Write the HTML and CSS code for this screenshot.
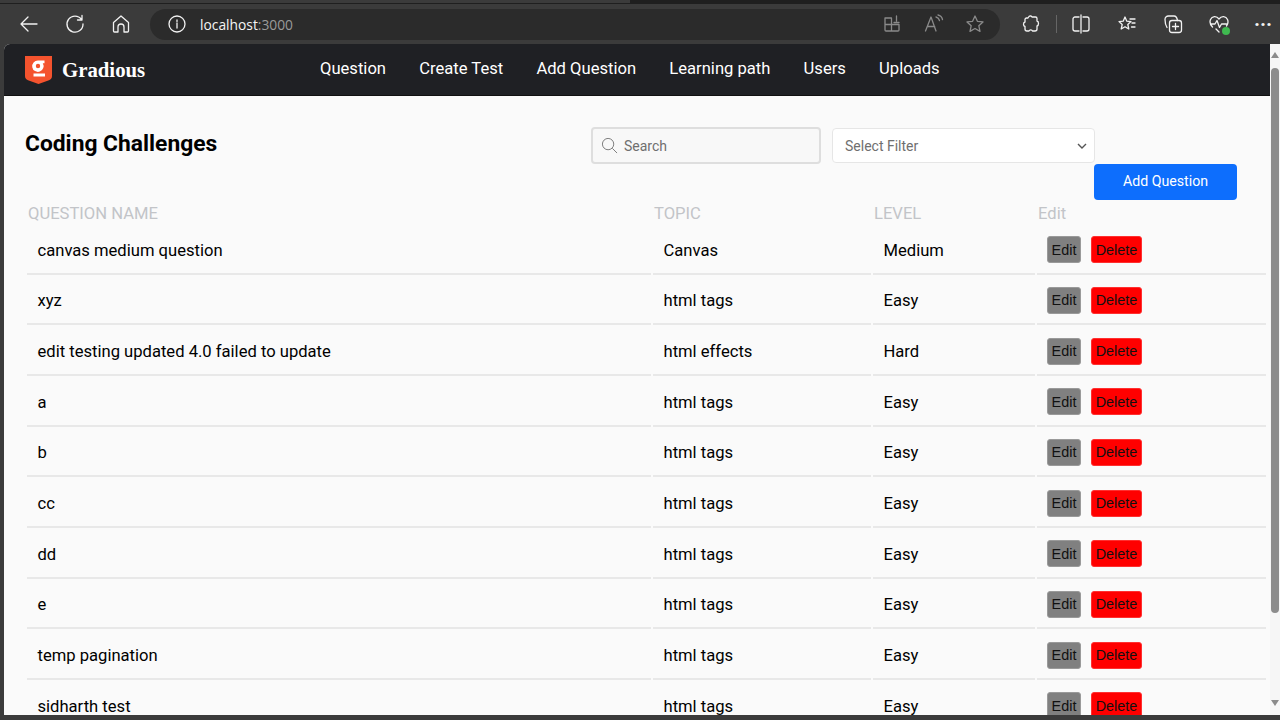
FILE: index.html
```html
<!DOCTYPE html>
<html lang="en">
<head>
  <meta charset="UTF-8">
  <title>Coding Challenges</title>
  <link rel="stylesheet" href="styles.css">
</head>
<body>
  <div class="browser">
    <div class="tabstrip"><span class="tab-edge"></span></div>
    <div class="toolbar">
      <svg class="tool tool-back" viewBox="0 0 20 20"><path d="M18 10H2M9 3l-7 7 7 7"/></svg>
      <svg class="tool tool-reload" viewBox="0 0 20 20"><path d="M16.5 5.5A8 8 0 1 0 18 10M17 1.5v4.5h-4.5"/></svg>
      <svg class="tool tool-home" viewBox="0 0 20 20"><path d="M2.5 8.5 10 2l7.500 6.500V17a1 1 0 0 1-1 1H13v-5a3 3 0 0 0-6 0v5H3.500a1 1 0 0 1-1-1z"/></svg>
      <div class="address">
        <svg class="tool tool-info" viewBox="0 0 20 20"><circle cx="10" cy="10" r="8"/><path d="M10 9v5M10 6v1.400"/></svg>
        <span class="url">localhost<span class="port">:3000</span></span>
        <svg class="tool dim tool-apps" viewBox="0 0 20 20"><path d="M2 4h6.500v13H3a1 1 0 0 1-1-1zM2 10.500h14V16a1 1 0 0 1-1 1H8.500M11 8.500H16M13.500 2v5"/></svg>
        <svg class="tool dim tool-read" viewBox="0 0 20 20"><path d="M1.500 17 7 3l5 14M3.200 12.500h7.500M12 3c2 .5 3 1.500 3.500 3.500M14 1c2.500.5 4 2 4.500 4.500"/></svg>
        <svg class="tool dim tool-star" viewBox="0 0 20 20"><path d="m10 2 2.400 5.300 5.600.6-4.200 3.800 1.200 5.700-5-2.900-5 2.900 1.200-5.700L2 7.900l5.600-.6z"/></svg>
      </div>
      <svg class="tool tool-ext" viewBox="0 0 20 20"><path d="M8 2.500c1-1 2.500-.5 3 .5h3.500a1.500 1.500 0 0 1 1.500 1.500V7c2 .5 2 4.500 0 5v3a2 2 0 0 1-2 2h-2.500c-.5-1.500-3-1.500-3.500 0H6a2 2 0 0 1-2-2v-2.500C2 12 2 8.500 4 8V5.500A1.500 1.500 0 0 1 5.500 4H7z"/></svg>
      <span class="divider"></span>
      <svg class="tool tool-split" viewBox="0 0 20 20"><path d="M8 3H4a2 2 0 0 0-2 2v10a2 2 0 0 0 2 2h4M12 3h4a2 2 0 0 1 2 2v10a2 2 0 0 1-2 2h-4M10 1v18"/></svg>
      <svg class="tool tool-favs" viewBox="0 0 20 20"><path d="m8 3 1.800 4.200 4.200.4-3.200 2.900 1 4.500L8 12.700 4.200 15l1-4.500L2 7.600l4.200-.4zM13 5h5M15 9h3M14.500 13H18"/></svg>
      <svg class="tool tool-coll" viewBox="0 0 20 20"><rect x="6.500" y="6.500" width="12" height="12" rx="2.500"/><path d="M4 13.500C2.500 11 2 8 2 5.500 2 3.500 3.500 2 5.500 2H11c2 0 3 1.500 3.500 4.500M12.500 9.500v6M9.500 12.500h6"/></svg>
      <span class="health">
        <svg class="tool tool-heart" viewBox="0 0 20 20"><path d="M3.500 13C1 10.500.5 8 1.500 5.500 3 2 7.500 1.500 10 5c2.500-3.500 7-3 8.500.5 1 2.500.5 4.500-1 6.500M1.500 10H6l2-3.500 2.500 7 2-3.500h5M7 15l3 3"/></svg>
        <span class="health-dot"></span>
      </span>
      <span class="more">&middot;&middot;&middot;</span>
    </div>

    <div class="viewport">
      <div class="page">
        <nav class="navbar">
          <div class="brand">
            <svg class="logo" viewBox="0 0 27 28">
              <path class="logo-shield" d="M0 0h27v20c0 2-1 3.500-3 4.200L13.500 28 3 24.200C1 23.500 0 22 0 20z"/>
              <path class="logo-g" d="M13 4.500h6.500v2.800h-1.700a5.700 5.700 0 1 1-4.800-2.800zM13 7.800a2.200 2.200 0 1 0 0 4.400 2.200 2.200 0 0 0 0-4.400zM8.500 17.500H20v3H8.500z"/>
            </svg>
            <span class="brand-name">Gradious</span>
          </div>
          <div class="nav-links">
            <a>Question</a>
            <a>Create Test</a>
            <a>Add Question</a>
            <a>Learning path</a>
            <a>Users</a>
            <a>Uploads</a>
          </div>
        </nav>

        <main class="content">
          <div class="top-row">
            <h1>Coding Challenges</h1>
            <div class="search">
              <svg class="search-icon" viewBox="0 0 18 18"><circle cx="7.500" cy="7.500" r="6"/><path d="m12 12 5 5"/></svg>
              <span>Search</span>
            </div>
            <div class="filter">
              <span>Select Filter</span>
              <svg class="chevron" viewBox="0 0 10 6"><path d="m1 1 4 4 4-4"/></svg>
            </div>
          </div>
          <div class="add-row"><button class="add-btn">Add Question</button></div>

          <table class="questions">
            <thead>
              <tr><th class="col-name">QUESTION NAME</th><th class="col-topic">TOPIC</th><th class="col-level">LEVEL</th><th>Edit</th></tr>
            </thead>
            <tbody>
              <tr><td>canvas medium question</td><td>Canvas</td><td>Medium</td><td class="actions"><button class="edit">Edit</button><button class="delete">Delete</button></td></tr>
              <tr><td>xyz</td><td>html tags</td><td>Easy</td><td class="actions"><button class="edit">Edit</button><button class="delete">Delete</button></td></tr>
              <tr><td>edit testing updated 4.0 failed to update</td><td>html effects</td><td>Hard</td><td class="actions"><button class="edit">Edit</button><button class="delete">Delete</button></td></tr>
              <tr><td>a</td><td>html tags</td><td>Easy</td><td class="actions"><button class="edit">Edit</button><button class="delete">Delete</button></td></tr>
              <tr><td>b</td><td>html tags</td><td>Easy</td><td class="actions"><button class="edit">Edit</button><button class="delete">Delete</button></td></tr>
              <tr><td>cc</td><td>html tags</td><td>Easy</td><td class="actions"><button class="edit">Edit</button><button class="delete">Delete</button></td></tr>
              <tr><td>dd</td><td>html tags</td><td>Easy</td><td class="actions"><button class="edit">Edit</button><button class="delete">Delete</button></td></tr>
              <tr><td>e</td><td>html tags</td><td>Easy</td><td class="actions"><button class="edit">Edit</button><button class="delete">Delete</button></td></tr>
              <tr><td>temp pagination</td><td>html tags</td><td>Easy</td><td class="actions"><button class="edit">Edit</button><button class="delete">Delete</button></td></tr>
              <tr><td>sidharth test</td><td>html tags</td><td>Easy</td><td class="actions"><button class="edit">Edit</button><button class="delete">Delete</button></td></tr>
            </tbody>
          </table>
        </main>
      </div>

      <div class="scrollbar">
        <span class="arrow-up"></span>
        <span class="thumb"></span>
        <span class="arrow-down"></span>
      </div>
    </div>
    <div class="bottom-edge"></div>
  </div>
</body>
</html>
```

FILE: styles.css
```css
* {
  box-sizing: border-box;
}

html, body {
  margin: 0;
  height: 100%;
  overflow: hidden;
}

body {
  background: #3b3b3b;
  font-family: Roboto, sans-serif;
  font-size: 16.6px;
  color: #000;
}

.browser {
  height: 720px;
  display: flex;
  flex-direction: column;
  background: #3b3b3b;
}

.tabstrip {
  height: 4px;
  background: #1f1f1f;
  flex: none;
}

.tab-edge {
  display: block;
  width: 630px;
  height: 3px;
  background: #3b3b3b;
}

/* browser toolbar */
.toolbar {
  height: 40px;
  flex: none;
  display: flex;
  align-items: center;
  position: relative;
  padding-left: 19px;
}

.tool {
  width: 20px;
  height: 20px;
  flex: none;
  fill: none;
  stroke: #f2f2f2;
  stroke-width: 1.3;
  stroke-linecap: round;
  stroke-linejoin: round;
}

.tool.dim {
  stroke: #8a8a8a;
}

.tool-reload {
  margin-left: 26px;
}

.tool-home {
  margin-left: 26px;
}

.address {
  width: 850px;
  height: 31px;
  margin-left: 19px;
  padding-left: 17px;
  border-radius: 16px;
  background: #2b2b2b;
  display: flex;
  align-items: center;
  flex: none;
}

.url {
  margin-left: 13px;
  width: 683px;
  font-family: "Segoe UI", "Open Sans", sans-serif;
  font-size: 13.8px;
  color: #f5f5f5;
}

.port {
  color: #9a9a9a;
}

.tool-read {
  margin-left: 21px;
}

.tool-star {
  margin-left: 21px;
}

.tool-ext {
  margin-left: 21px;
}

.divider {
  width: 1px;
  height: 18px;
  margin-left: 15px;
  background: #666;
  flex: none;
}

.tool-split {
  margin-left: 14px;
}

.tool-favs {
  margin-left: 26px;
}

.tool-coll {
  margin-left: 26px;
}

.health {
  position: relative;
  margin-left: 26px;
  height: 20px;
  flex: none;
}

.health-dot {
  position: absolute;
  right: -1px;
  bottom: -1px;
  width: 8px;
  height: 8px;
  border-radius: 50%;
  background: #3fb950;
}

.more {
  margin-left: 25px;
  color: #f2f2f2;
  font-size: 20px;
  font-weight: bold;
  line-height: 20px;
}

/* page */
.viewport {
  flex: 1;
  min-height: 0;
  margin-left: 4px;
  display: flex;
  background: #fafafa;
  border-top-left-radius: 6px;
  overflow: hidden;
}

.bottom-edge {
  height: 5px;
  flex: none;
  background: #3b3b3b;
}

.page {
  flex: 1;
  min-width: 0;
  overflow: hidden;
}

.navbar {
  height: 52px;
  background: #1f2024;
  border-bottom: 1px solid #111;
  display: flex;
  align-items: center;
  padding-left: 21px;
}

.brand {
  width: 295px;
  display: flex;
  align-items: center;
  gap: 10px;
}

.logo {
  width: 27px;
  height: 28px;
}

.logo-shield {
  fill: #f4532e;
}

.logo-g {
  fill: #fff;
  fill-rule: evenodd;
}

.brand-name {
  font-family: "Liberation Serif", serif;
  font-weight: bold;
  font-size: 20.8px;
  color: #fff;
}

.nav-links {
  display: flex;
  gap: 33.2px;
  margin-top: -3px;
}

.nav-links a {
  color: #fff;
  font-size: 16.6px;
}

.content {
  padding: 31px 0 0 21px;
}

.top-row {
  display: flex;
  align-items: flex-start;
}

h1 {
  width: 566px;
  margin: 2px 0 0;
  font-size: 22.8px;
  line-height: 30px;
  font-weight: 700;
}

.search {
  width: 230px;
  height: 37px;
  display: flex;
  align-items: center;
  gap: 6px;
  padding-left: 8px;
  border: 2px solid #dedede;
  border-radius: 4px;
  background: #f8f8f8;
  color: #6f6f6f;
  font-size: 14px;
}

.search-icon {
  width: 17px;
  height: 17px;
  fill: none;
  stroke: #777;
  stroke-width: 1;
}

.filter {
  width: 263px;
  height: 35px;
  margin: 1px 0 0 11px;
  display: flex;
  align-items: center;
  justify-content: space-between;
  padding: 0 7px 0 12px;
  background: #fff;
  border: 1px solid #e6e6e6;
  border-radius: 4px;
  color: #6f6f6f;
  font-size: 14px;
}

.chevron {
  width: 10px;
  height: 6px;
  fill: none;
  stroke: #555;
  stroke-width: 1.4;
}

.add-row {
  display: flex;
  justify-content: flex-end;
  padding-right: 33px;
}

.add-btn {
  width: 143px;
  height: 36px;
  padding-bottom: 3px;
  border: none;
  border-radius: 4px;
  background: #0d6efd;
  color: #fff;
  font-family: Roboto, sans-serif;
  font-size: 14.2px;
}

/* table */
.questions {
  width: 1243px;
  margin-top: 1px;
  border-collapse: separate;
  border-spacing: 2px 0;
  table-layout: fixed;
}

.col-name {
  width: 624px;
}

.col-topic {
  width: 218px;
}

.col-level {
  width: 162px;
}

.questions th {
  height: 23px;
  padding: 2px 0 0 1px;
  text-align: left;
  font-weight: 400;
  color: #c2c4c8;
}

.questions td {
  height: 50.67px;
  padding: 4px 0 0 10.5px;
  border-bottom: 2px solid #e8e8e8;
}

.questions td.actions {
  padding-top: 3px;
  padding-left: 10px;
}

.edit, .delete {
  height: 27px;
  padding: 0;
  border: 1px solid #9a9a9a;
  border-radius: 3px;
  font-family: "Liberation Sans", Arial, sans-serif;
  font-size: 14.4px;
  color: #111;
}

.edit {
  width: 34px;
  background: #808080;
}

.delete {
  width: 51px;
  margin-left: 10px;
  background: #ff0000;
  border-color: #ff3030;
}

/* scrollbar */
.scrollbar {
  width: 10px;
  flex: none;
  background: #f6f6f6;
  display: flex;
  flex-direction: column;
  align-items: center;
  padding-top: 8px;
}

.arrow-up {
  width: 0;
  height: 0;
  border-left: 4px solid transparent;
  border-right: 4px solid transparent;
  border-bottom: 6px solid #8a8a8a;
}

.thumb {
  width: 8px;
  height: 545px;
  margin-top: 10px;
  border-radius: 4px;
  background: #8c8c8c;
}

.arrow-down {
  width: 0;
  height: 0;
  margin-top: 87px;
  border-left: 4px solid transparent;
  border-right: 4px solid transparent;
  border-top: 6px solid #8a8a8a;
}
```
